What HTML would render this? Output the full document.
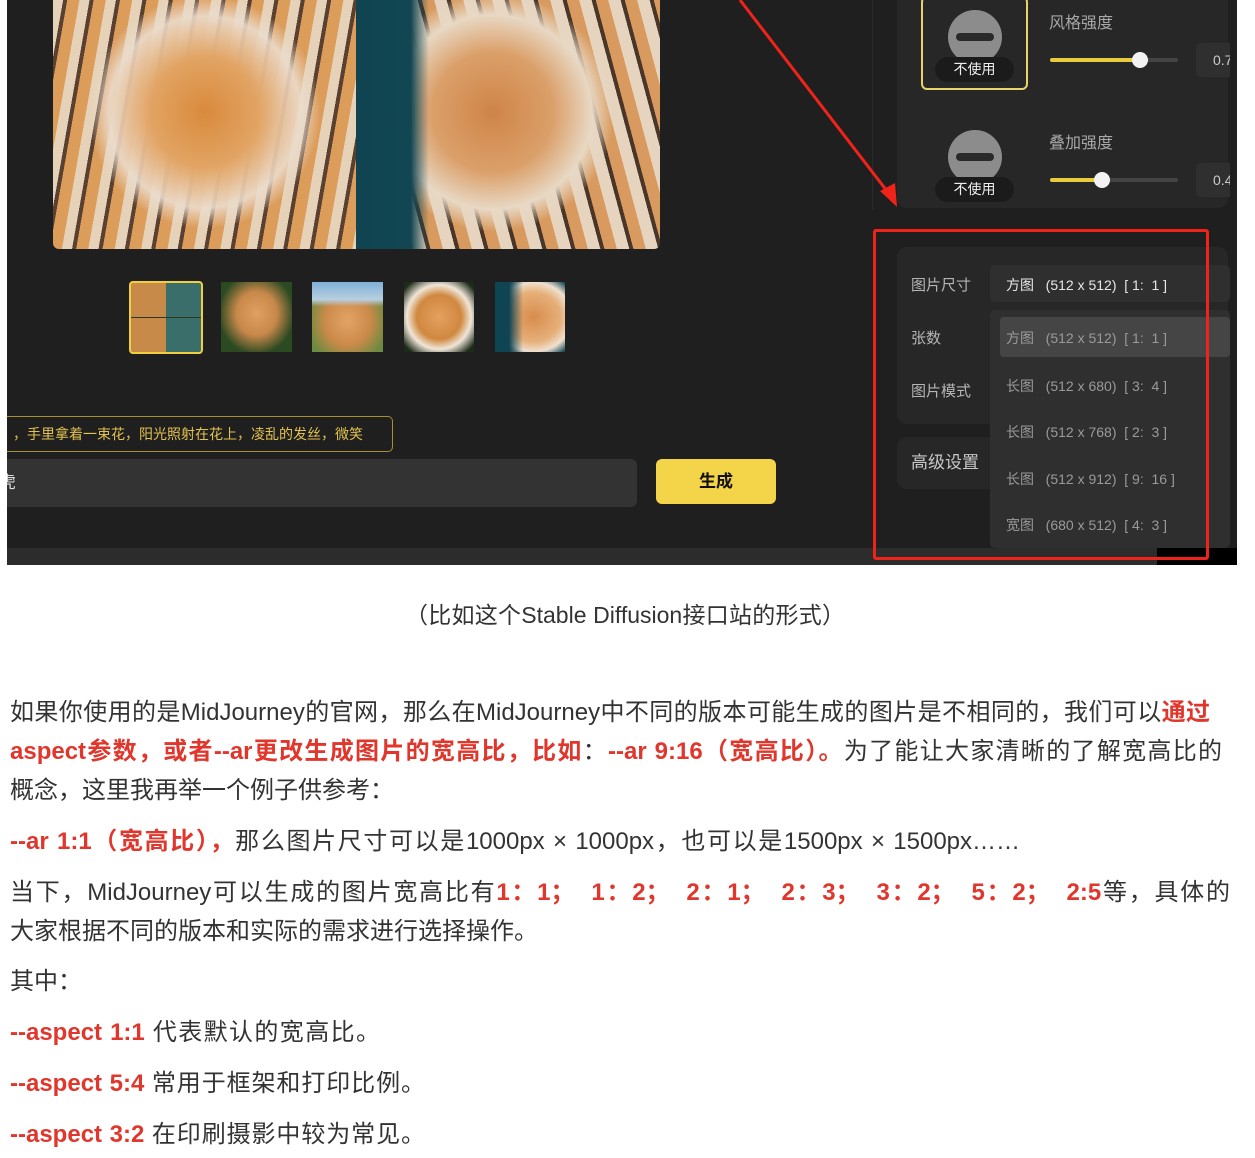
<!DOCTYPE html>
<html><head><meta charset="utf-8"><style>
*{margin:0;padding:0;box-sizing:border-box}
body{width:1255px;height:1158px;background:#fff;position:relative;overflow:hidden;font-family:"Liberation Sans","Noto Sans CJK SC",sans-serif}
.abs{position:absolute}
.shot{left:7px;top:0;width:1230px;height:565px;background:#1f1f1f;overflow:hidden}
.t{position:absolute;left:10px;font-size:24px;color:#333;white-space:nowrap;line-height:30px;text-align:justify;text-align-last:justify}
.r{color:#e0362c;font-weight:bold}
.lbl{color:#b5b5b5;font-size:15px}
.opt{position:absolute;left:1006px;font-size:14px;color:#9a9a9a;white-space:pre}
</style></head><body>
<div class="abs shot"></div>
<!-- tiger image -->
<div class="abs" style="left:53px;top:0;width:303px;height:249px;border-radius:0 0 0 6px;background:radial-gradient(ellipse 45% 55% at 50% 45%,#d98a3c 0%,#e2a464 40%,rgba(235,220,205,.9) 70%,transparent 85%),repeating-linear-gradient(100deg,#e6d2b8 0 10px,#5a4030 10px 14px,#dc9c5a 14px 26px),#2d5a2a;overflow:hidden"></div>
<div class="abs" style="left:356px;top:0;width:304px;height:249px;border-radius:0 0 6px 0;background:linear-gradient(90deg,#0f4450 0%,#114652 18%,transparent 24%),radial-gradient(ellipse 50% 60% at 45% 45%,#cf8448 0%,#dba06a 40%,#e8d8c4 65%,transparent 80%),repeating-linear-gradient(75deg,#e6d4bf 0 12px,#4a3628 12px 16px,#d89a5e 16px 28px)"></div>
<!-- thumbnails -->
<div class="abs" style="left:129px;top:281px;width:74px;height:73px;border:2px solid #f1cf3c;border-radius:4px;background:linear-gradient(#0000 49%,#2a3a20 49% 51%,#0000 51%),linear-gradient(90deg,#c88a48 50%,#3a6e6a 50%)"></div>
<div class="abs" style="left:221px;top:282px;width:71px;height:70px;background:radial-gradient(ellipse at 50% 45%,#e0a060,#c8884a 40%,#2c4a22 75%)"></div>
<div class="abs" style="left:312px;top:282px;width:71px;height:70px;background:linear-gradient(#7fb0d8 0%,#b8cfe0 25%,transparent 35%),radial-gradient(ellipse at 50% 55%,#e2a466,#cc8a4a 45%,#6e8a40 80%)"></div>
<div class="abs" style="left:404px;top:282px;width:70px;height:70px;background:radial-gradient(ellipse at 50% 50%,#e6a060,#d08840 45%,#f0e6d8 65%,#1c2a18 90%)"></div>
<div class="abs" style="left:495px;top:282px;width:70px;height:70px;background:linear-gradient(90deg,#0f4452 20%,transparent 40%),radial-gradient(ellipse at 55% 50%,#d88c4c,#e6b07a 50%,#f0e0d0 70%,#0f4452 90%)"></div>
<!-- prompt -->
<div class="abs" style="left:7px;top:416px;width:386px;height:36px;border:1px solid #a8902e;border-left:none;border-radius:0 5px 5px 0;color:#e3c24e;font-size:14px;line-height:34px;padding-left:6px;white-space:nowrap">，手里拿着一束花，阳光照射在花上，凌乱的发丝，微笑</div>
<div class="abs" style="left:7px;top:459px;width:630px;height:48px;background:#333;border-radius:0 6px 6px 0;color:#ddd;font-size:17px;line-height:48px;padding-left:0;overflow:hidden"><span style="margin-left:-8px">虎</span></div>
<div class="abs" style="left:656px;top:459px;width:120px;height:45px;background:#f4d448;border-radius:6px;color:#111;font-size:17px;font-weight:bold;text-align:center;line-height:45px">生成</div>
<!-- right panel -->
<div class="abs" style="left:872px;top:0;width:1px;height:210px;background:#2c2c2c"></div>
<div class="abs" style="left:897px;top:0;width:331px;height:208px;background:#272727;border-radius:0 0 10px 10px"></div>
<div class="abs" style="left:921px;top:-4px;width:107px;height:94px;border:2px solid #e8d46c;border-radius:6px"></div>
<div class="abs" style="left:948px;top:10px;width:54px;height:54px;border-radius:50%;background:#8c8c8c"></div>
<div class="abs" style="left:956px;top:33px;width:38px;height:8px;border-radius:4px;background:#2a2a2a"></div>
<div class="abs" style="left:935px;top:57px;width:79px;height:25px;border-radius:13px;background:#1b1b1b;color:#eee;font-size:14px;text-align:center;line-height:25px">不使用</div>
<div class="abs" style="left:948px;top:130px;width:54px;height:54px;border-radius:50%;background:#8c8c8c"></div>
<div class="abs" style="left:956px;top:153px;width:38px;height:8px;border-radius:4px;background:#2a2a2a"></div>
<div class="abs" style="left:935px;top:177px;width:79px;height:25px;border-radius:13px;background:#1b1b1b;color:#eee;font-size:14px;text-align:center;line-height:25px">不使用</div>
<div class="abs lbl" style="left:1049px;top:9px;font-size:16px;color:#a8a8a8">风格强度</div>
<div class="abs lbl" style="left:1049px;top:129px;font-size:16px;color:#a8a8a8">叠加强度</div>
<div class="abs" style="left:1050px;top:58px;width:128px;height:4px;border-radius:2px;background:linear-gradient(90deg,#e9cc3e 70%,#444 70%)"></div>
<div class="abs" style="left:1132px;top:52px;width:16px;height:16px;border-radius:50%;background:#f2f2f2"></div>
<div class="abs" style="left:1050px;top:178px;width:128px;height:4px;border-radius:2px;background:linear-gradient(90deg,#e9cc3e 40%,#444 40%)"></div>
<div class="abs" style="left:1094px;top:172px;width:16px;height:16px;border-radius:50%;background:#f2f2f2"></div>
<div class="abs" style="left:1196px;top:43px;width:34px;height:34px;border-radius:5px 0 0 5px;background:#2f2f2f;color:#ccc;font-size:14px;line-height:34px;padding-left:17px;overflow:hidden">0.7</div>
<div class="abs" style="left:1196px;top:163px;width:34px;height:34px;border-radius:5px 0 0 5px;background:#2f2f2f;color:#ccc;font-size:14px;line-height:34px;padding-left:17px;overflow:hidden">0.4</div>
<div class="abs" style="left:897px;top:247px;width:331px;height:177px;background:#272727;border-radius:10px"></div>
<div class="abs lbl" style="left:911px;top:274px">图片尺寸</div>
<div class="abs lbl" style="left:911px;top:327px">张数</div>
<div class="abs lbl" style="left:911px;top:380px">图片模式</div>
<div class="abs" style="left:897px;top:437px;width:120px;height:52px;background:#272727;border-radius:10px;color:#c8c8c8;font-size:17px;line-height:52px;padding-left:14px">高级设置</div>
<div class="abs" style="left:990px;top:265px;width:240px;height:37px;background:#2f2f2f;border-radius:5px"></div>
<div class="opt" style="top:275px;color:#e8e8e8">方图   (512 x 512)  [ 1:  1 ]</div>
<div class="abs" style="left:990px;top:310px;width:240px;height:238px;background:#2f2f2f;border-radius:5px"></div>
<div class="abs" style="left:1000px;top:317px;width:230px;height:40px;background:#454545;border-radius:4px"></div>
<div class="opt" style="top:328px">方图   (512 x 512)  [ 1:  1 ]</div>
<div class="opt" style="top:376px">长图   (512 x 680)  [ 3:  4 ]</div>
<div class="opt" style="top:422px">长图   (512 x 768)  [ 2:  3 ]</div>
<div class="opt" style="top:469px">长图   (512 x 912)  [ 9:  16 ]</div>
<div class="opt" style="top:515px">宽图   (680 x 512)  [ 4:  3 ]</div>
<div class="abs" style="left:7px;top:548px;width:1150px;height:17px;background:#2c2c2c"></div>
<div class="abs" style="left:1157px;top:548px;width:80px;height:17px;background:#000"></div>
<div class="abs" style="left:1237px;top:0;width:18px;height:565px;background:#fff"></div>
<div class="abs" style="left:873px;top:229px;width:336px;height:331px;border:3px solid #f0231a;border-radius:3px"></div>
<svg class="abs" style="left:0;top:0" width="1255" height="565"><line x1="740" y1="0" x2="890" y2="195" stroke="#f0231a" stroke-width="3"/><polygon points="897,207 880,191 895,183" fill="#f0231a"/></svg>
<!-- caption & text -->
<div class="abs" style="left:405px;width:440px;top:596px;font-size:23px;color:#333;white-space:nowrap;text-align:justify;text-align-last:justify">（比如这个Stable Diffusion接口站的形式）</div>
<div class="t" style="top:698px;width:1200px">如果你使用的是MidJourney的官网，那么在MidJourney中不同的版本可能生成的图片是不相同的，我们可以<span class="r">通过</span></div>
<div class="t" style="top:737px;width:1212px"><span class="r">aspect参数，或者--ar更改生成图片的宽高比，比如</span>：<span class="r">--ar 9:16（宽高比）。</span>为了能让大家清晰的了解宽高比的</div>
<div class="t" style="top:776px;width:377px">概念，这里我再举一个例子供参考：</div>
<div class="t" style="top:827px;width:1010px"><span class="r">--ar 1:1（宽高比），</span>那么图片尺寸可以是1000px × 1000px，也可以是1500px × 1500px……</div>
<div class="t" style="top:878px;width:1220px;white-space:pre">当下，MidJourney可以生成的图片宽高比有<span class="r">1：1；  1：2；  2：1；  2：3；  3：2；  5：2；  2:5</span>等，具体的</div>
<div class="t" style="top:917px;width:525px">大家根据不同的版本和实际的需求进行选择操作。</div>
<div class="t" style="top:967px">其中：</div>
<div class="t" style="top:1018px;width:370px"><span class="r">--aspect 1:1</span> 代表默认的宽高比。</div>
<div class="t" style="top:1069px;width:415px"><span class="r">--aspect 5:4</span> 常用于框架和打印比例。</div>
<div class="t" style="top:1120px;width:415px"><span class="r">--aspect 3:2</span> 在印刷摄影中较为常见。</div>
</body></html>
